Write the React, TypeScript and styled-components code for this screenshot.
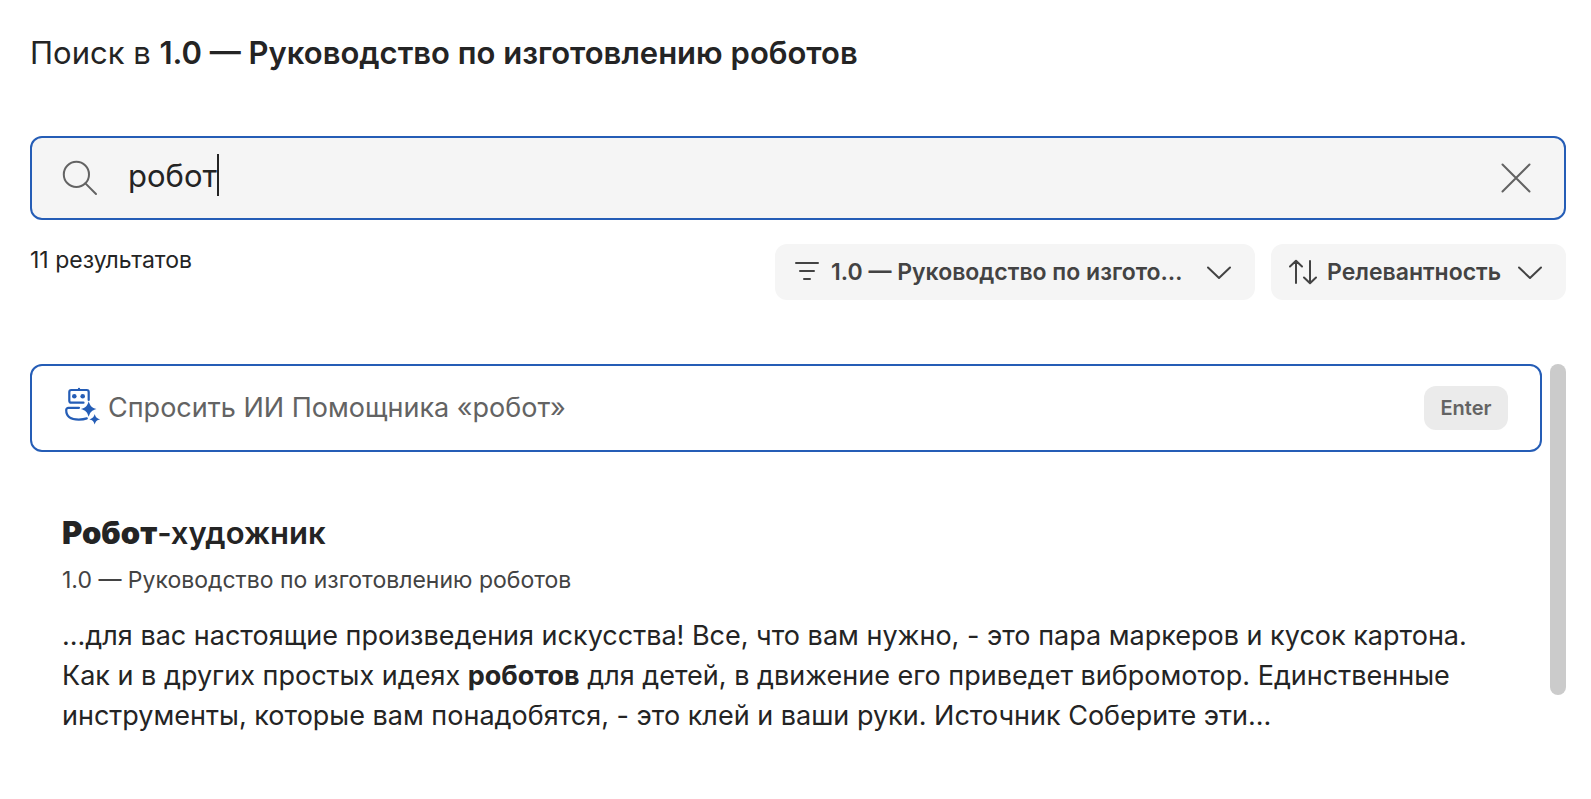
import React, { useState } from 'react';
import styled, { createGlobalStyle } from 'styled-components';

const color = {
  text: '#242424',
  secondary: '#434343',
  muted: '#636363',
  accent: '#255db6',
  field: '#f5f5f5',
  chip: '#ebebeb',
  thumb: '#cbcbcb',
};

const GlobalStyle = createGlobalStyle`
  *, *::before, *::after { box-sizing: border-box; }
  body {
    margin: 0;
    background: #fff;
    color: ${color.text};
    font-family: Inter, Roboto, "Liberation Sans", sans-serif;
  }
  button, input, select { font: inherit; color: inherit; }
`;

const Page = styled.main`
  padding: 32px 25px 0 30px;
`;

const Heading = styled.h1`
  margin: 0 0 62px;
  font-size: 31px;
  line-height: 42px;
  font-weight: 400;

  strong { font-weight: 600; }
`;

const SearchBox = styled.form`
  display: flex;
  align-items: center;
  height: 84px;
  padding: 0 28px;
  border: 2px solid ${color.accent};
  border-radius: 12px;
  background: ${color.field};
  color: ${color.muted};
`;

const SearchField = styled.label`
  display: flex;
  flex: 1;
  align-items: center;
  min-width: 0;
  margin-left: 28px;
  padding-bottom: 6px;
  color: ${color.text};
  cursor: text;
`;

const SearchInput = styled.input`
  field-sizing: content;
  min-width: 0;
  max-width: 100%;
  height: 42px;
  padding: 0;
  border: 0;
  outline: 0;
  background: none;
  font-size: 31px;
  caret-color: transparent;
`;

const Caret = styled.span`
  flex: none;
  width: 2px;
  height: 42px;
  background: ${color.text};
`;

const IconButton = styled.button`
  display: flex;
  padding: 0;
  border: 0;
  background: none;
  color: ${color.muted};
  cursor: pointer;
`;

const Toolbar = styled.div`
  display: flex;
  align-items: flex-start;
  gap: 16px;
  margin-top: 24px;
`;

const Count = styled.p`
  flex: 1;
  margin: 0;
  font-size: 23px;
  line-height: 32px;
  white-space: nowrap;
`;

const Dropdown = styled.label<{ $basis?: string; $gap?: number }>`
  display: flex;
  flex: 0 1 ${(p) => p.$basis ?? 'auto'};
  align-items: center;
  min-width: 0;
  height: 56px;
  padding: 0 24px 0 18px;
  border-radius: 12px;
  background: ${color.field};
  color: ${color.secondary};

  select {
    flex: 1;
    min-width: 0;
    height: 32px;
    margin: 0 ${(p) => p.$gap ?? 16}px 0 10px;
    padding: 0;
    border: 0;
    outline: 0;
    appearance: none;
    background: none;
    font-size: 23px;
    font-weight: 600;
    overflow: hidden;
    text-overflow: ellipsis;
    white-space: nowrap;
    cursor: pointer;
  }
`;

const Results = styled.section`
  display: flex;
  gap: 8px;
  margin-top: 64px;
`;

const ResultList = styled.div`
  flex: 1;
  min-width: 0;
`;

const ScrollThumb = styled.div`
  flex: none;
  width: 16px;
  height: 331px;
  border-radius: 8px;
  background: ${color.thumb};
`;

const AskButton = styled.button`
  display: flex;
  align-items: center;
  gap: 6px;
  width: 100%;
  height: 88px;
  padding: 0 32px 0 30px;
  border: 2px solid ${color.accent};
  border-radius: 12px;
  background: #fff;
  color: ${color.muted};
  font-size: 27px;
  text-align: left;
  cursor: pointer;
`;

const AskText = styled.span`
  flex: 1;
  line-height: 40px;
`;

const Key = styled.kbd`
  min-width: 84px;
  padding: 6px 16px;
  border-radius: 12px;
  background: ${color.chip};
  font-family: inherit;
  font-size: 20px;
  line-height: 32px;
  font-weight: 600;
  text-align: center;
`;

const Result = styled.article`
  margin-top: 60px;
  padding: 0 32px;

  mark {
    background: none;
    color: inherit;
    font-weight: 700;
  }
`;

const ResultTitle = styled.h2`
  margin: 0;
  font-size: 31px;
  line-height: 42px;
  font-weight: 600;

  a { color: inherit; text-decoration: none; }
  mark { font-weight: 900; }
`;

const ResultSource = styled.p`
  margin: 10px 0 20px;
  color: ${color.secondary};
  font-size: 23px;
  line-height: 32px;
`;

const Snippet = styled.p`
  margin: 0;
  font-size: 27px;
  line-height: 40px;
`;

const Line = styled.svg`
  flex: none;
  fill: none;
  stroke: currentColor;
  stroke-width: 2;
  stroke-linecap: round;
  stroke-linejoin: round;
`;

const Robot = styled.svg`
  flex: none;
  fill: none;
  stroke: ${color.accent};
  stroke-width: 2.2;
  stroke-linecap: round;
  stroke-linejoin: round;

  .solid { fill: ${color.accent}; stroke: none; }
`;

const SearchIcon = () => (
  <Line width="40" height="40" viewBox="0 0 40 40" aria-hidden="true">
    <circle cx="16.4" cy="16.4" r="12.6" />
    <path d="M25.4 25.4 36 36" />
  </Line>
);

const CloseIcon = () => (
  <Line width="40" height="40" viewBox="0 0 40 40" aria-hidden="true">
    <path d="M6.5 6.5 33.5 33.5M33.5 6.5 6.5 33.5" />
  </Line>
);

const FilterIcon = () => (
  <Line width="28" height="28" viewBox="0 0 28 28" aria-hidden="true">
    <path d="M3 5H25M7 13H21M11 21H17" />
  </Line>
);

const SortIcon = () => (
  <Line width="28" height="28" viewBox="0 0 28 28" aria-hidden="true">
    <path d="M7 25V3M1 8.5 7 2.8 13 8.5M21 3V25M15 19.5 21 25.2 27 19.5" />
  </Line>
);

const ChevronIcon = () => (
  <Line width="24" height="24" viewBox="0 0 24 24" aria-hidden="true">
    <path d="M1 7.5 12 18 23 7.5" />
  </Line>
);

const RobotIcon = () => (
  <Robot width="40" height="48" viewBox="0 0 40 48" aria-hidden="true">
    <path d="M21.5 18.7H9.3a2 2 0 0 1-2-2V8a2 2 0 0 1 2-2h15.4a2 2 0 0 1 2 2v8M17 4.8V6" />
    <circle className="solid" cx="12.3" cy="12.3" r="2.3" />
    <circle className="solid" cx="20.7" cy="12.3" r="2.3" />
    <path d="M17 23.8H6.4a2.2 2.2 0 0 0-2.2 2.2c0 6.4 4.6 9.6 12.6 9.6 3.2 0 5.8-.4 8-1.2" />
    <path className="solid" d="M26.7 17.2c1.5 4.9 3 6.3 7.8 7.8-4.8 1.5-6.3 3-7.8 7.8-1.5-4.8-3-6.3-7.8-7.8 4.8-1.5 6.3-2.9 7.8-7.8Z" />
    <path className="solid" d="M32.7 30c1 3.4 2 4.3 5.4 5.3-3.4 1-4.4 2-5.4 5.3-1-3.3-2-4.3-5.4-5.3 3.4-1 4.4-1.9 5.4-5.3Z" />
  </Robot>
);

const guide = '1.0 — Руководство по изготовлению роботов';

export default function App() {
  const [query, setQuery] = useState('робот');

  return (
    <>
      <GlobalStyle />
      <Page>
        <Heading>
          Поиск в <strong>{guide}</strong>
        </Heading>

        <SearchBox role="search" onSubmit={(e) => e.preventDefault()}>
          <SearchIcon />
          <SearchField>
            <SearchInput
              type="text"
              aria-label="Поиск"
              value={query}
              onChange={(e) => setQuery(e.target.value)}
            />
            <Caret aria-hidden="true" />
          </SearchField>
          <IconButton type="button" aria-label="Очистить" onClick={() => setQuery('')}>
            <CloseIcon />
          </IconButton>
        </SearchBox>

        <Toolbar>
          <Count>11 результатов</Count>
          <Dropdown $basis="480px" $gap={20}>
            <FilterIcon />
            <select aria-label="Раздел">
              <option>{guide}</option>
            </select>
            <ChevronIcon />
          </Dropdown>
          <Dropdown>
            <SortIcon />
            <select aria-label="Сортировка">
              <option>Релевантность</option>
            </select>
            <ChevronIcon />
          </Dropdown>
        </Toolbar>

        <Results>
          <ResultList>
            <AskButton type="button">
              <RobotIcon />
              <AskText>Спросить ИИ Помощника «{query}»</AskText>
              <Key>Enter</Key>
            </AskButton>

            <Result>
              <ResultTitle>
                <a href="#robot-artist">
                  <mark>Робот</mark>-художник
                </a>
              </ResultTitle>
              <ResultSource>{guide}</ResultSource>
              <Snippet>
                ...для вас настоящие произведения искусства! Все, что вам нужно, - это пара маркеров и
                кусок картона. Как и в других простых идеях <mark>роботов</mark> для детей, в движение
                его приведет вибромотор. Единственные инструменты, которые вам понадобятся, - это клей и
                ваши руки. Источник Соберите эти...
              </Snippet>
            </Result>
          </ResultList>
          <ScrollThumb />
        </Results>
      </Page>
    </>
  );
}
